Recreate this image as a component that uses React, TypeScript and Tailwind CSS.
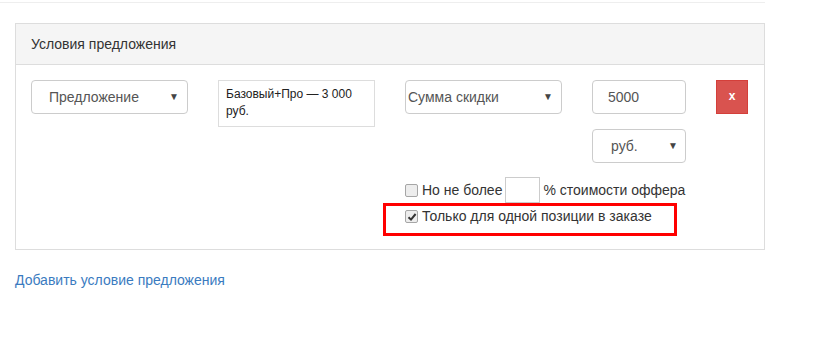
const Arrow = () => <span className="text-[10px] leading-none text-[#444]">▼</span>;

const Checkbox = ({ checked }: { checked?: boolean }) => (
  <span className="flex h-[13px] w-[13px] items-center justify-center rounded-[2px] border border-[#a6a6a6] bg-[#ededed]">
    {checked && (
      <svg width="10" height="10" viewBox="0 0 10 10">
        <path d="M1.5 5.2 L4 7.6 L8.6 2" fill="none" stroke="#333" strokeWidth="2" />
      </svg>
    )}
  </span>
);

export default function App() {
  return (
    <div className="h-[353px] w-[822px] bg-white font-['Liberation_Sans',Arial,sans-serif] text-[14px] text-[#333]">
      <div className="pt-[2px]">
        <div className="w-[765px] border-t border-[#eee]" />
      </div>

      {/* panel */}
      <div className="ml-[15px] mt-[20px] w-[750px] border border-[#ddd]">
        <div className="border-b border-[#ddd] bg-[#f5f5f5] px-[15px] py-[10px] leading-[20px]">
          Условия предложения
        </div>

        <div className="px-[15px] pb-[19px] pt-[15px]">
          <div className="flex items-start gap-[30px]">
            <div className="flex h-[34px] w-[157px] items-center justify-between rounded-[4px] border border-[#ccc] pl-[17px] pr-[8px] text-[#555]">
              <span>Предложение</span>
              <Arrow />
            </div>

            <div className="h-[47px] w-[157px] border border-[#ddd] px-[7px] pt-[5px] text-[12px] leading-[17px] text-[#222]">
              Базовый+Про — 3 000 руб.
            </div>

            <div className="flex h-[34px] w-[157px] items-center justify-between rounded-[4px] border border-[#ccc] pl-[2px] pr-[8px] text-[#555]">
              <span>Сумма скидки</span>
              <Arrow />
            </div>

            <div className="flex w-[94px] flex-col gap-[15px]">
              <div className="flex h-[34px] items-center rounded-[4px] border border-[#ccc] pl-[15px] text-[#555]">
                5000
              </div>
              <div className="flex h-[34px] items-center justify-between rounded-[4px] border border-[#ccc] pl-[18px] pr-[7px] text-[#555]">
                <span>руб.</span>
                <Arrow />
              </div>
            </div>

            <div className="flex h-[34px] w-[32px] items-center justify-center border border-[#d43f3a] bg-[#d9534f] pb-[2px] text-[12px] font-bold text-white">
              x
            </div>
          </div>

          <div className="ml-[374px] mt-[14px]">
            <div className="flex h-[26px] items-center">
              <Checkbox />
              <span className="ml-[4px]">Но не более</span>
              <span className="ml-[3px] h-[26px] w-[35px] border border-[#ccc]" />
              <span className="ml-[3px]">% стоимости оффера</span>
            </div>
            <div className="relative flex h-[27px] items-center">
              <Checkbox checked />
              <span className="ml-[4px]">Только для одной позиции в заказе</span>
              <div className="absolute left-[-22px] top-0 h-[33px] w-[294px] border-[3px] border-[#ff0000]" />
            </div>
          </div>
        </div>
      </div>

      <div className="ml-[15px] mt-[20px] leading-[20px] text-[#3a7bbf]">
        Добавить условие предложения
      </div>
    </div>
  );
}
